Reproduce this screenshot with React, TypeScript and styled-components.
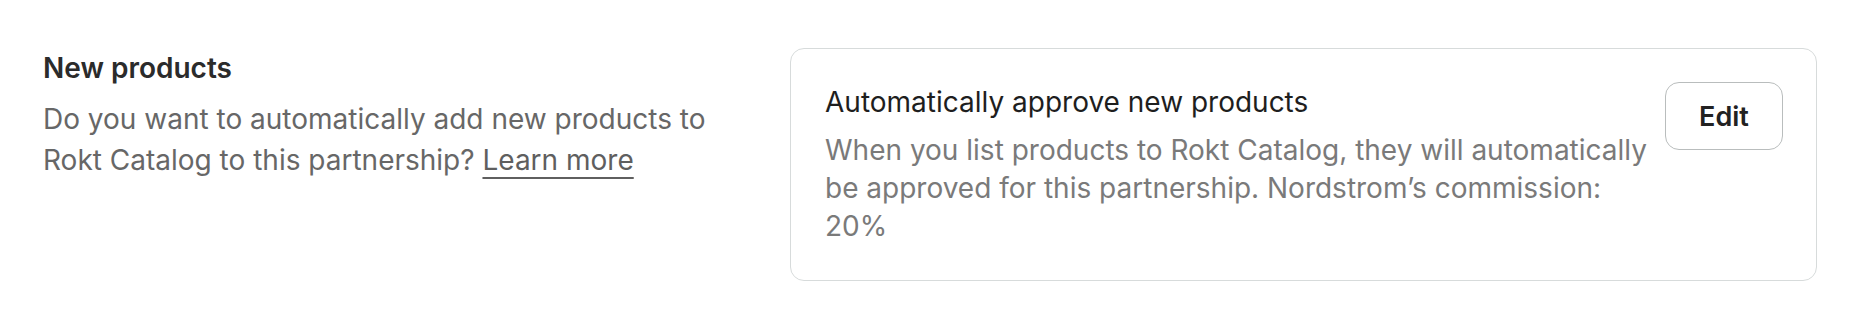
import React from "react";
import styled, { createGlobalStyle } from "styled-components";

const GlobalStyle = createGlobalStyle`
  html, body {
    margin: 0;
    padding: 0;
    background: #ffffff;
  }
  body {
    font-family: Inter, "Noto Sans", "Liberation Sans", sans-serif;
    -webkit-font-smoothing: antialiased;
  }
`;

const Section = styled.section`
  display: flex;
  align-items: flex-start;
  gap: 48px;
  padding: 48px 53px 0 43px;
`;

const Intro = styled.div`
  display: flex;
  flex-direction: column;
  gap: 14px;
  width: 699px;
  flex: none;
  padding-top: 3px;
`;

const Heading = styled.h3`
  margin: 0;
  font-size: 28px;
  line-height: 34px;
  font-weight: 600;
  color: #2b2b2b;
`;

const Description = styled.p`
  margin: 0;
  font-size: 28px;
  line-height: 41px;
  font-weight: 400;
  color: #676767;
`;

const LearnMore = styled.a`
  color: #5f5f5f;
  text-decoration: underline;
  text-underline-offset: 7px;
  text-decoration-thickness: 2px;
  cursor: pointer;
`;

const Card = styled.div`
  flex: 1;
  display: flex;
  align-items: flex-start;
  gap: 8px;
  padding: 33px 33px 35px 34px;
  border: 1.5px solid #d7dbdb;
  border-radius: 14px;
`;

const CardBody = styled.div`
  flex: 1;
  display: flex;
  flex-direction: column;
  gap: 9px;
`;

const CardTitle = styled.div`
  font-size: 28px;
  line-height: 40px;
  font-weight: 400;
  color: #1e1e1e;
`;

const CardText = styled.div`
  font-size: 28px;
  line-height: 38px;
  color: #7a7a7a;
`;

const EditButton = styled.button`
  flex: none;
  width: 118px;
  height: 68px;
  border: 1.5px solid #b9bdbd;
  border-radius: 14px;
  background: #ffffff;
  font-family: inherit;
  font-size: 27px;
  font-weight: 600;
  color: #222222;
  cursor: pointer;
`;

export default function App() {
  return (
    <>
      <GlobalStyle />
      <Section>
        <Intro>
          <Heading>New products</Heading>
          <Description>
            Do you want to automatically add new products to Rokt Catalog to
            this partnership? <LearnMore>Learn more</LearnMore>
          </Description>
        </Intro>
        <Card>
          <CardBody>
            <CardTitle>Automatically approve new products</CardTitle>
            <CardText>
              When you list products to Rokt Catalog, they will automatically
              be approved for this partnership. Nordstrom’s commission: 20%
            </CardText>
          </CardBody>
          <EditButton>Edit</EditButton>
        </Card>
      </Section>
    </>
  );
}
